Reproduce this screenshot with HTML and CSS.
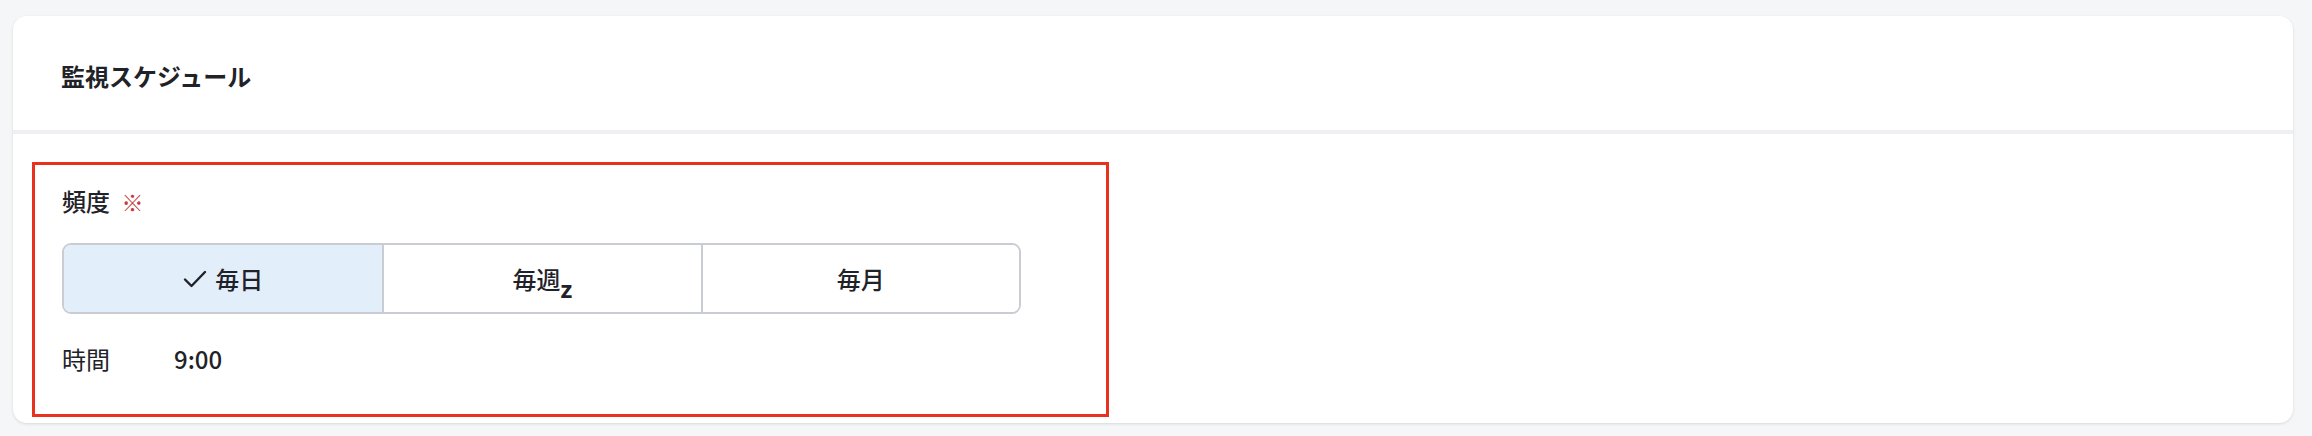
FILE: index.html
```html
<!DOCTYPE html>
<html lang="ja">
<head>
  <meta charset="UTF-8">
  <meta name="viewport" content="width=device-width, initial-scale=1.0">
  <title>監視スケジュール</title>
  <link rel="stylesheet" href="styles.css">
</head>
<body>
  <div class="card">
    <div class="card-header">
      <h2>監視スケジュール</h2>
    </div>
    <div class="card-body">
      <div class="highlight">
        <div class="field-label">頻度 <span class="required">※</span></div>
        <div class="segmented">
          <button class="segment selected">
            <svg class="check" width="24" height="20" viewBox="0 0 24 20">
              <polyline points="2,10.5 8.5,17 22,3" fill="none" stroke="#1f2329" stroke-width="2.4" stroke-linecap="round" stroke-linejoin="round"/>
            </svg>
            <span>毎日</span>
          </button>
          <button class="segment"><span>毎週<span class="sub">z</span></span></button>
          <button class="segment"><span>毎月</span></button>
        </div>
        <div class="time-row">
          <span class="time-label">時間</span>
          <span class="time-value">9:00</span>
        </div>
      </div>
    </div>
  </div>
</body>
</html>
```

FILE: styles.css
```css
body {
  font-family: "Noto Sans CJK JP", "Noto Sans", sans-serif;
  margin: 0;
  padding: 16px 19px 14px 13px;
  background-color: #f5f6f8;
  color: #1f2329;
}
.card {
  background-color: #fff;
  border-radius: 14px;
  box-shadow: 0 1px 3px rgba(0, 0, 0, 0.12);
}
.card-header {
  height: 118px;
  padding: 4px 48px 0;
  box-sizing: border-box;
  display: flex;
  align-items: center;
  border-bottom: 4px solid #eff0f3;
}
.card-header h2 {
  margin: 0;
  font-size: 24px;
  font-weight: 700;
}
.card-body {
  padding: 28px 0 6px 19px;
}
.highlight {
  width: 1077px;
  box-sizing: border-box;
  border: 3px solid #e8321f;
  padding: 18px 0 37px 27px;
}
.field-label {
  font-size: 24px;
  font-weight: 500;
  line-height: 36px;
}
.required {
  color: #c23b3b;
  font-size: 22px;
  margin-left: 6px;
}
.segmented {
  margin-top: 24px;
  width: 959px;
  height: 71px;
  box-sizing: border-box;
  display: grid;
  grid-template-columns: repeat(3, 1fr);
  border: 2px solid #c9ccd2;
  border-radius: 9px;
  overflow: hidden;
}
.segment {
  display: flex;
  align-items: center;
  justify-content: center;
  gap: 8px;
  background: #fff;
  border: none;
  border-left: 2px solid #c9ccd2;
  font-family: inherit;
  font-size: 24px;
  font-weight: 500;
  color: #1f2329;
  padding: 0;
}
.segment:first-child {
  border-left: none;
}
.segment.selected {
  background-color: #e3eefb;
}
.sub {
  font-weight: 700;
  font-family: "Noto Sans", sans-serif;
  position: relative;
  top: 9px;
}
.time-row {
  margin-top: 27px;
  display: flex;
  font-size: 24px;
  line-height: 36px;
}
.time-label {
  width: 112px;
}
.time-value {
  font-weight: 500;
}
```
